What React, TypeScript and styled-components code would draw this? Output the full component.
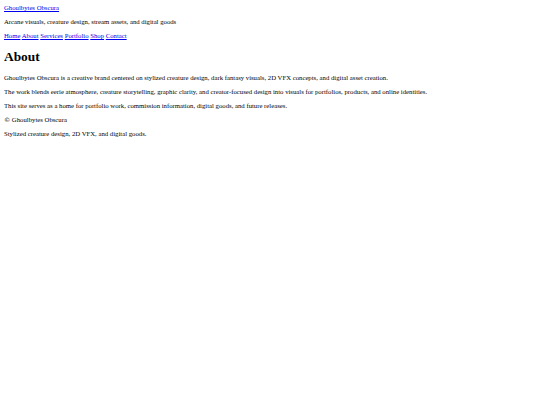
import React from "react";
import styled, { createGlobalStyle } from "styled-components";

const Global = createGlobalStyle`
  html, body { background: #ffffff; }
  body {
    margin: 4px;
    font-family: "Liberation Serif", "Times New Roman", serif;
    font-size: 6.72px;
    line-height: 7.5px;
    color: #000000;
  }
`;

const Header = styled.header`
  display: block;
`;

const BrandRow = styled.div`
  display: block;
`;

const Link = styled.a`
  color: #0000ee;
  text-decoration: underline;
`;

const Text = styled.p`
  margin: 6.5px 0;
`;

const Copy = styled.span`
  font-family: "DejaVu Serif", "Liberation Serif", serif;
  font-size: 6.2px;
`;

const Nav = styled.nav`
  display: block;
`;

const Title = styled.h1`
  font-size: 13.4px;
  line-height: 15px;
  font-weight: bold;
  margin: 9.75px 0;
`;

const Main = styled.main`
  display: block;
`;

const Footer = styled.footer`
  display: block;
`;

const navItems = ["Home", "About", "Services", "Portfolio", "Shop", "Contact"];

export default function App() {
  return (
    <>
      <Global />
      <Header>
        <BrandRow>
          <Link href="#">Ghoulbytes Obscura</Link>
        </BrandRow>
        <Text>Arcane visuals, creature design, stream assets, and digital goods</Text>
        <Nav>
          {navItems.map((item, i) => (
            <React.Fragment key={item}>
              <Link href="#">{item}</Link>
              {i < navItems.length - 1 ? " " : null}
            </React.Fragment>
          ))}
        </Nav>
      </Header>
      <Main>
        <Title>About</Title>
        <Text>
          Ghoulbytes Obscura is a creative brand centered on stylized creature design, dark fantasy visuals, 2D VFX concepts, and digital asset creation.
        </Text>
        <Text>
          The work blends eerie atmosphere, creature storytelling, graphic clarity, and creator-focused design into visuals for portfolios, products, and online identities.
        </Text>
        <Text>
          This site serves as a home for portfolio work, commission information, digital goods, and future releases.
        </Text>
      </Main>
      <Footer>
        <Text>
          <Copy>{"\u00A9"}</Copy> Ghoulbytes Obscura
        </Text>
        <Text>Stylized creature design, 2D VFX, and digital goods.</Text>
      </Footer>
    </>
  );
}
